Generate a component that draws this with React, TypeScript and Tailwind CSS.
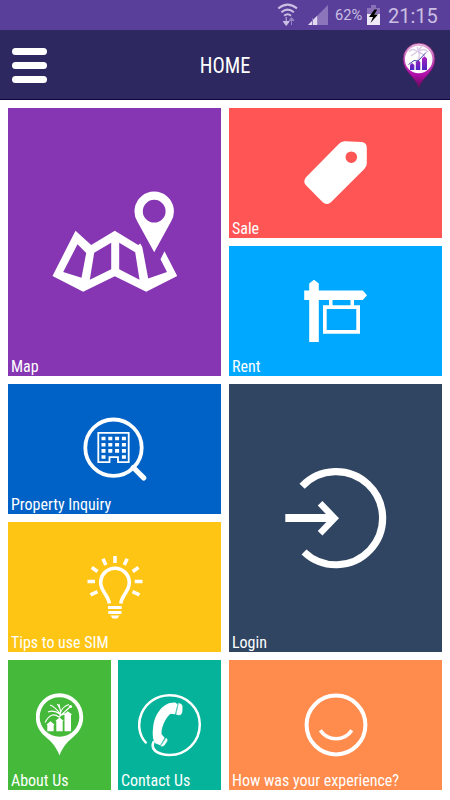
import React from "react";

type TileProps = {
  label: string;
  color: string;
  children: React.ReactNode;
};

function Tile({ label, color, children }: TileProps) {
  return (
    <div className={`relative flex items-center justify-center overflow-hidden ${color}`}>
      {children}
      <span className="absolute bottom-0 left-[3px] origin-left scale-x-[.94] whitespace-nowrap text-[17px] leading-[20px] text-white">
        {label}
      </span>
    </div>
  );
}

function MapIcon() {
  return (
    <svg width="126" height="102" viewBox="51.5 191 126 102" fill="white" fillRule="evenodd">
      <path d="M52 276 75 230.7 90.7 245 114.3 230.7 137.7 245 139.8 243.5 141.7 247 142.7 251.7 147.7 278.6 166.5 272 160 259.3 164 251.3 176.7 276 145.7 291.7 114.3 276.3 82.7 291.7ZM77 244.3 62.7 272 81 277.7 85.7 253ZM93.7 252.7 89.3 279.7 110.7 269.3V242.7ZM118.7 242.7V269.3L139 279.7 134.7 252.3Z" />
      <path d="M153.7 252.3 136.7 221.2A19.7 19.7 0 1 1 170.7 221.2ZM153.7 199.8A11.4 11.4 0 1 0 153.7 222.6 11.4 11.4 0 1 0 153.7 199.8Z" />
    </svg>
  );
}

function SaleIcon() {
  return (
    <svg width="64" height="64" viewBox="304 141 64 64" fill="white" fillRule="evenodd">
      <path d="M345 141.3 361.5 142Q366.8 142.4 366.8 148V163.5Q366.8 166.5 364.3 169L331.2 202Q327 206 322.5 202L306 185.3Q302.5 181.5 306 177.2L338.8 144Q341.5 141 345 141.3ZM351.3 151.4A5.8 5.8 0 1 0 351.3 163 5.8 5.8 0 1 0 351.3 151.4Z" />
    </svg>
  );
}

function RentIcon() {
  return (
    <svg width="64" height="64" viewBox="304 279 64 64" fill="white">
      <path d="M309.2 342V300H304.2V290.5H309.2V283.5L314 279.8 318.8 283.5V290.5H362.8L367 295.3 362.8 300H354V305.3H360V333.8H323V305.3H329V300H318.8V342ZM332.5 300V305.3H350.5V300ZM326.7 309V330H356.3V309Z" fillRule="evenodd" />
    </svg>
  );
}

function InquiryIcon() {
  return (
    <svg width="64" height="64" viewBox="82.5 417 64 64" fill="none" stroke="white">
      <circle cx="113" cy="447.7" r="28.2" strokeWidth="3.8" />
      <path d="m132.8 467.5 10.4 10.4" strokeWidth="5.2" strokeLinecap="round" />
      <path d="M97.8 432.8H128.2V462.2H117.5V457.2H109V462.2H97.8Z" strokeWidth="1.8" />
      {[438.5, 444.7, 450.9].map((y) => (
        <path key={y} d={`M101 ${y}h25`} strokeWidth="3.6" strokeDasharray="4 2.8" />
      ))}
      <path d="M101 457h25" strokeWidth="3.4" strokeDasharray="4 16.4" />
    </svg>
  );
}

function TipsIcon() {
  return (
    <svg width="58" height="64" viewBox="85.5 555 58 64" fill="none" stroke="white">
      <path d="M108.8 603.5C107.8 595 100.2 591.5 100.2 582.5A14.3 14.3 0 0 1 128.8 582.5C128.8 591.5 121.3 595 120.3 603.5" strokeWidth="3.6" />
      <path d="M107.5 607.5H121.2M107.8 612.4H121" strokeWidth="3" />
      <path d="M110 615.6H119L116.7 618.5H112.2Z" fill="white" stroke="none" />
      <path d="M114.5 556V563M102.5 558.8 105.3 565M126.7 558.8 123.8 565M91.3 567.5 97 571.5M138 567.5 132.2 571.5M87 581.5H94.5M134.2 581.5H142M90 594.8 97 591.7M139 594.8 132 591.7" strokeWidth="3.5" />
    </svg>
  );
}

function LoginIcon() {
  return (
    <svg width="102" height="102" viewBox="284.7 467 102 102" fill="none" stroke="white">
      <path d="M301.8 486.2A46.6 46.6 0 1 1 303.7 552" strokeWidth="7.2" />
      <path d="M285 518H334" strokeWidth="7.8" />
      <path d="M319.8 503.3 334.2 518.2 319.8 533.2" strokeWidth="6.5" />
    </svg>
  );
}

function AboutIcon() {
  return (
    <svg width="48" height="64" viewBox="35.5 693.5 48 64" fill="white">
      <path fillRule="evenodd" d="M59 693.8A23.7 23.7 0 0 1 82.7 717.5C82.7 727 78 733 73 737.3 66 743 61.5 749 59 756 56.5 749 52 743 45 737.3 40 733 35.3 727 35.3 717.5A23.7 23.7 0 0 1 59 693.8ZM59 697.7A19.8 19.8 0 1 0 59 737.3 19.8 19.8 0 1 0 59 697.7Z" />
      <path d="M46.8 731.8V725.6L46 725 50 721.8 54 725 53.2 725.6V731.8ZM55.8 731.8V721.8L55 721.2 59 718 63 721.2 62.2 721.8V731.8ZM64 731.8V715.6L63 715 67.3 711.8 71.5 715 70.5 715.6V731.8Z" />
      <path d="M44.5 723C49 715 53 713.5 58.5 717.5L70 707M59 718C61 714 60 709 56.8 704.5M59.5 714Q54 707 49.5 705.5M60 713Q62 707 68.5 705M60 715Q53 710 47.5 712.5M60 712 58.5 704.5M60 716Q64 714 67 714" fill="none" stroke="white" strokeWidth="1.1" />
      <circle cx="70" cy="707" r="1.6" />
    </svg>
  );
}

function ContactIcon() {
  return (
    <svg width="64" height="64" viewBox="138 693 64 64" fill="none" stroke="white" strokeWidth="2.5" strokeLinecap="round">
      <path d="M145.7 742.5C131.5 727 141 695.7 169.8 695.3 187 695.2 199.8 708.5 199.8 724.5 199.8 742 186 755.2 169.5 755 159 754.8 150 750.5 153.5 742" />
      <path d="M175.3 702.5C164 701.5 154.8 713 153.2 726.5 152.2 734.5 152.8 740.5 155.7 743.5L160.2 745.2 164.7 737.8 161.7 734.6C160.5 729 165.5 717.5 170.6 713.8L175 714.2 177.5 704.3Z" fill="white" stroke="none" />
      <path d="M178.7 703.2Q182.5 704 182.3 706.5L182.1 711.8Q181.7 714.8 179.3 715L176.3 714.4ZM166.2 738.2Q168 739.3 167 741.3L164.7 744.8Q163.2 747 160.9 745.9Z" fill="white" stroke="white" strokeWidth=".4" />
    </svg>
  );
}

function SmileIcon() {
  return (
    <svg width="64" height="64" viewBox="303.7 693.2 64 64" fill="none" stroke="white">
      <circle cx="335.7" cy="725.2" r="29.4" strokeWidth="4" />
      <path d="M320 730.5C327.5 741.8 344 741.8 351.5 730.5" strokeWidth="3.7" />
    </svg>
  );
}

function StatusBar() {
  return (
    <div className="flex h-[30px] items-center bg-[#5a3f9a] pl-[277px] font-[Roboto,sans-serif] text-[#cabfe2]">
      <svg width="24" height="30" viewBox="277 0 24 30" fill="none" stroke="currentColor">
        <path d="M278.3 8.4Q287.6 .8 297 8.4M281.4 12.3Q287.6 7 293.9 12.3M284.2 15.7Q287.6 12.8 291 15.7" strokeWidth="2" />
        <path d="M286.2 17V22.2M283.3 21.5H289.2L286.2 25.5Z" fill="currentColor" strokeWidth="1" />
        <path d="M291.5 25V20M289.2 20.5H294L291.5 17.5Z" stroke="#9681c2" fill="#9681c2" />
      </svg>
      <svg className="ml-[6px]" width="21" height="30" viewBox="307 0 21 30">
        <path d="M308 25 328 5V25Z" fill="#8c75bb" />
        <path d="M308 25 317.2 15.8V25Z" fill="#e2daf0" />
        <path d="M312.5 18V25" stroke="#8c75bb" />
      </svg>
      <span className="ml-[7px] w-[29px] origin-left scale-x-[1.05] whitespace-nowrap text-[14px]">62%</span>
      <svg className="ml-[3px]" width="14" height="30" viewBox="367 0 14 30">
        <path d="M371 5H376V8H380V25H367V8H371Z" fill="#8970b8" />
        <path d="M367 14H380V25H367Z" fill="#eee8f7" />
        <path d="M374.5 9.5 369 17H373L370.5 23 378 14.5H374.3L377.2 9.5Z" fill="black" />
      </svg>
      <span className="ml-[7px] whitespace-nowrap pt-px text-[20px] leading-none">21:15</span>
    </div>
  );
}

function BrandPin() {
  return (
    <svg width="34" height="46" viewBox="402 41 34 46">
      <defs>
        <linearGradient id="pin" x1="0" y1="0" x2="0" y2="1">
          <stop offset="0" stopColor="#eab7dd" />
          <stop offset=".4" stopColor="#bd4bb5" />
          <stop offset=".7" stopColor="#b10fac" />
          <stop offset="1" stopColor="#6b075c" />
        </linearGradient>
        <linearGradient id="bars" x1="0" y1="0" x2="0" y2="1">
          <stop offset="0" stopColor="#af20be" />
          <stop offset="1" stopColor="#4d26c4" />
        </linearGradient>
      </defs>
      <path d="M419 86.5C415.5 76 403 71 403 58A16 16 0 0 1 435 58C435 71 422.5 76 419 86.5Z" fill="url(#pin)" stroke="#64165f" strokeWidth=".7" />
      <circle cx="418.7" cy="58.5" r="13.8" fill="white" />
      <path d="M418 59Q421 54 417 46M418 51Q412 46 409 51M418 51Q424 46 428 51M418 50 411 55M418 50 425 55M418 50 422 45" fill="none" stroke="#d9c9e6" strokeWidth="1.4" />
      <path d="M410 69V64L412 62 414.3 64V69ZM415.8 69V61L418 59 420.3 61V69ZM422 69V57.5L424.4 55.3 427 57.5V69Z" fill="url(#bars)" />
      <path d="M408.5 63.5 414 59.5 418 60 426 51.5" fill="none" stroke="#3f48aa" strokeWidth="1" />
    </svg>
  );
}

export default function App() {
  return (
    <div className="flex h-[800px] w-[450px] flex-col overflow-hidden bg-white font-['Roboto_Condensed',Roboto,sans-serif]">
      <StatusBar />
      <header className="flex h-[70px] items-center justify-between border-b border-[#0d0641] bg-[#2d285f] pr-[14px] pl-[12px]">
        <div className="flex w-[35px] flex-col gap-[7px] pt-px">
          <i className="h-[7px] rounded-full bg-white" />
          <i className="h-[7px] rounded-full bg-white" />
          <i className="h-[7px] rounded-full bg-white" />
        </div>
        <h1 className="scale-x-[.93] pt-[3px] pl-[2px] text-[22px] leading-[26px] text-white">HOME</h1>
        <BrandPin />
      </header>
      <main className="flex gap-[8px] px-[8px] pt-[8px]">
        <div className="grid w-[213px] grid-rows-[268px_130px_130px_130px] gap-[8px]">
          <Tile label="Map" color="bg-[#8635b3]"><MapIcon /></Tile>
          <Tile label="Property Inquiry" color="bg-[#0062c6]"><InquiryIcon /></Tile>
          <Tile label="Tips to use SIM" color="bg-[#ffc515]"><TipsIcon /></Tile>
          <div className="grid grid-cols-2 gap-[7px]">
            <Tile label="About Us" color="bg-[#44b93a]"><AboutIcon /></Tile>
            <Tile label="Contact Us" color="bg-[#04b39a]"><ContactIcon /></Tile>
          </div>
        </div>
        <div className="grid w-[213px] grid-rows-[130px_130px_268px_130px] gap-[8px]">
          <Tile label="Sale" color="bg-[#ff5555]"><SaleIcon /></Tile>
          <Tile label="Rent" color="bg-[#00a9ff]"><RentIcon /></Tile>
          <Tile label="Login" color="bg-[#304562]"><LoginIcon /></Tile>
          <Tile label="How was your experience?" color="bg-[#ff8b4c]"><SmileIcon /></Tile>
        </div>
      </main>
    </div>
  );
}
